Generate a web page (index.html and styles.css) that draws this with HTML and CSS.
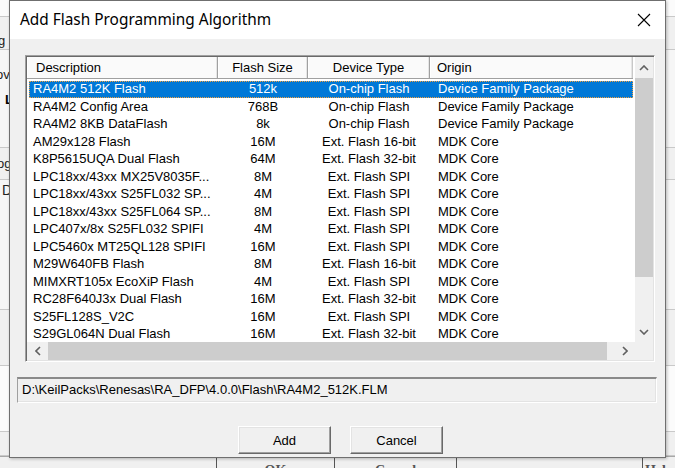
FILE: index.html
```html
<!DOCTYPE html>
<html>
<head>
<meta charset="utf-8">
<link rel="stylesheet" href="styles.css">
</head>
<body>
<div class="desktop">
  <div class="backwin">
    <div class="band b-white b1"></div>
    <div class="band b-gray b2"><span class="frag f-g">g</span></div>
    <div class="band b-light b3"><span class="frag f-ov">ov</span><span class="frag f-L">L</span></div>
    <div class="band b-gray b4"><span class="frag f-og">og</span></div>
    <div class="band b-light b5"><span class="frag f-D">D</span></div>
    <div class="band b-gray b6"></div>
    <div class="band b-white b7"></div>
    <div class="band b-gray b8"></div>
    <div class="band b-bottom b9">
      <span class="bcell bc1"></span>
      <span class="bcell bc2">OK</span>
      <span class="bcell bc3">Cancel</span>
      <span class="bcell bc4"></span>
      <span class="bcell bc5">Help</span>
    </div>
  </div>

  <div class="dialog">
    <div class="titlebar">
      <span class="title">Add Flash Programming Algorithm</span>
      <svg class="close" width="14" height="14" viewBox="0 0 14 14"><path d="M1 1 L13 13 M13 1 L1 13" stroke="#000" stroke-width="1.1" fill="none"/></svg>
    </div>
    <div class="body">
      <div class="listview">
        <div class="lv-main">
          <div class="lv-header">
            <div class="hcell c-desc">Description</div>
            <div class="hcell c-size">Flash Size</div>
            <div class="hcell c-type">Device Type</div>
            <div class="hcell c-origin">Origin</div>
          </div>
          <div class="lv-rows">
            <div class="row sel"><span class="c-desc">RA4M2 512K Flash</span><span class="c-size">512k</span><span class="c-type">On-chip Flash</span><span class="c-origin">Device Family Package</span></div>
            <div class="row"><span class="c-desc">RA4M2 Config Area</span><span class="c-size">768B</span><span class="c-type">On-chip Flash</span><span class="c-origin">Device Family Package</span></div>
            <div class="row"><span class="c-desc">RA4M2 8KB DataFlash</span><span class="c-size">8k</span><span class="c-type">On-chip Flash</span><span class="c-origin">Device Family Package</span></div>
            <div class="row"><span class="c-desc">AM29x128 Flash</span><span class="c-size">16M</span><span class="c-type">Ext. Flash 16-bit</span><span class="c-origin">MDK Core</span></div>
            <div class="row"><span class="c-desc">K8P5615UQA Dual Flash</span><span class="c-size">64M</span><span class="c-type">Ext. Flash 32-bit</span><span class="c-origin">MDK Core</span></div>
            <div class="row"><span class="c-desc">LPC18xx/43xx MX25V8035F...</span><span class="c-size">8M</span><span class="c-type">Ext. Flash SPI</span><span class="c-origin">MDK Core</span></div>
            <div class="row"><span class="c-desc">LPC18xx/43xx S25FL032 SP...</span><span class="c-size">4M</span><span class="c-type">Ext. Flash SPI</span><span class="c-origin">MDK Core</span></div>
            <div class="row"><span class="c-desc">LPC18xx/43xx S25FL064 SP...</span><span class="c-size">8M</span><span class="c-type">Ext. Flash SPI</span><span class="c-origin">MDK Core</span></div>
            <div class="row"><span class="c-desc">LPC407x/8x S25FL032 SPIFI</span><span class="c-size">4M</span><span class="c-type">Ext. Flash SPI</span><span class="c-origin">MDK Core</span></div>
            <div class="row"><span class="c-desc">LPC5460x MT25QL128 SPIFI</span><span class="c-size">16M</span><span class="c-type">Ext. Flash SPI</span><span class="c-origin">MDK Core</span></div>
            <div class="row"><span class="c-desc">M29W640FB Flash</span><span class="c-size">8M</span><span class="c-type">Ext. Flash 16-bit</span><span class="c-origin">MDK Core</span></div>
            <div class="row"><span class="c-desc">MIMXRT105x EcoXiP Flash</span><span class="c-size">4M</span><span class="c-type">Ext. Flash SPI</span><span class="c-origin">MDK Core</span></div>
            <div class="row"><span class="c-desc">RC28F640J3x Dual Flash</span><span class="c-size">16M</span><span class="c-type">Ext. Flash 32-bit</span><span class="c-origin">MDK Core</span></div>
            <div class="row"><span class="c-desc">S25FL128S_V2C</span><span class="c-size">16M</span><span class="c-type">Ext. Flash SPI</span><span class="c-origin">MDK Core</span></div>
            <div class="row"><span class="c-desc">S29GL064N Dual Flash</span><span class="c-size">16M</span><span class="c-type">Ext. Flash 32-bit</span><span class="c-origin">MDK Core</span></div>
          </div>
        </div>
        <div class="vscroll">
          <div class="sbtn vbtn"><svg width="10" height="6" viewBox="0 0 10 6"><polyline points="1,5 5,1 9,5" fill="none" stroke="#606060" stroke-width="1.6"/></svg></div>
          <div class="vthumb"></div>
          <div class="vtrack"></div>
          <div class="sbtn vbtn"><svg width="10" height="6" viewBox="0 0 10 6"><polyline points="1,1 5,5 9,1" fill="none" stroke="#606060" stroke-width="1.6"/></svg></div>
        </div>
        <div class="hscroll">
          <div class="sbtn hbtn"><svg width="6" height="10" viewBox="0 0 6 10"><polyline points="5,1 1,5 5,9" fill="none" stroke="#606060" stroke-width="1.6"/></svg></div>
          <div class="hthumb"></div>
          <div class="htrack"></div>
          <div class="sbtn hbtn"><svg width="6" height="10" viewBox="0 0 6 10"><polyline points="1,1 5,5 1,9" fill="none" stroke="#606060" stroke-width="1.6"/></svg></div>
        </div>
        <div class="corner"></div>
      </div>
      <div class="pathbox">D:\KeilPacks\Renesas\RA_DFP\4.0.0\Flash\RA4M2_512K.FLM</div>
      <div class="buttons">
        <div class="btn">Add</div>
        <div class="btn">Cancel</div>
      </div>
    </div>
  </div>
</div>
</body>
</html>
```

FILE: styles.css
```css
* { box-sizing: border-box; }
html, body { margin: 0; padding: 0; }
body {
  width: 675px;
  height: 468px;
  overflow: hidden;
  font-family: "Liberation Sans", Arial, sans-serif;
  background: #f0f0f0;
}
.desktop {
  position: relative;
  width: 675px;
  height: 468px;
  overflow: hidden;
}

/* background window */
.backwin {
  display: flex;
  flex-direction: column;
  height: 468px;
}
.band { position: relative; flex: none; border-bottom: 1px solid #c9c9c9; overflow: hidden; }
.b-white { background: #fbfbfb; }
.b-gray { background: #f0f0f0; }
.b-light { background: #f6f6f6; }
.b1 { height: 17px; }
.b2 { height: 33px; }
.b3 { height: 98px; }
.b4 { height: 32px; }
.b5 { height: 130px; }
.b6 { height: 56px; }
.b7 { height: 66px; }
.b8 { height: 24px; }
.b9 { flex: 1; border-bottom: 0; background: #f0f0f0; display: flex; border-top: 1px solid #a8a8a8; }
.frag { position: absolute; left: -2px; font-size: 13px; color: #222; }
.f-g { top: 16px; }
.f-ov { top: 17px; left: -4px; }
.f-L { top: 42px; left: 5px; font-weight: bold; color: #000; }
.f-og { top: 8px; left: -3px; }
.f-D { top: 2px; left: 2px; font-size: 14px; }
.bcell {
  font-family: "Liberation Serif", serif;
  font-size: 14px;
  font-weight: bold;
  color: #555;
  border-right: 1px solid #555;
  padding-top: 6px;
  text-align: center;
  line-height: 16px;
}
.bc1 { width: 217px; }
.bc2 { width: 118px; }
.bc3 { width: 122px; }
.bc4 { width: 186px; }
.bc5 { flex: 1; border-right: 0; text-align: left; padding-left: 2px; }

/* dialog */
.dialog {
  position: absolute;
  left: 9px;
  top: 0;
  width: 657px;
  height: 458px;
  border: 1px solid #6f6f6f;
  background: #f0f0f0;
  box-shadow: 1px 1px 3px rgba(0,0,0,0.25);
  display: flex;
  flex-direction: column;
}
.titlebar {
  height: 38px;
  background: #fff;
  display: flex;
  align-items: center;
  justify-content: space-between;
  padding: 0 14px 0 10px;
  flex: none;
}
.title {
  font-family: "Noto Sans", "Open Sans", sans-serif;
  font-size: 15.4px;
  color: #000;
  padding-bottom: 2px;
}
.close { display: block; margin-bottom: 1px; }

.body {
  flex: 1;
  padding: 16px 0 0 0;
  display: flex;
  flex-direction: column;
}

/* list view */
.listview {
  margin-left: 15px;
  width: 630px;
  height: 307px;
  border-top: 1px solid #a0a0a0;
  border-left: 1px solid #a0a0a0;
  border-right: 1px solid #fff;
  border-bottom: 1px solid #fff;
  box-shadow: inset 1px 1px 0 #696969, inset -1px -1px 0 #e3e3e3;
  padding: 1px;
  display: grid;
  grid-template-columns: 608px 18px;
  grid-template-rows: 285px 18px;
  background: #fff;
  font-size: 13px;
}
.lv-main { overflow: hidden; background: #fff; }
.lv-header {
  display: flex;
  height: 22px;
  width: 606px;
  background: #fafafa;
  border-bottom: 1px solid #a0a0a0;
}
.hcell {
  display: flex;
  align-items: center;
  border-right: 1px solid #a0a0a0;
  box-shadow: inset -1px 0 0 #e5e5e5, inset 1px 0 0 #fff;
  line-height: 16px;
  white-space: nowrap;
}
.lv-header .c-desc { width: 191px; padding-left: 9px; }
.lv-header .c-size { width: 90px; justify-content: center; }
.lv-header .c-type { width: 122px; justify-content: center; }
.lv-header .c-origin { flex: 1; padding-left: 7px; border-right: 1px solid #c8c8c8; }

.lv-rows { padding-top: 1.5px; }
.row {
  display: flex;
  height: 17.5px;
  margin: 0 2px;
  align-items: center;
  white-space: nowrap;
  color: #000;
}
.row span { display: block; line-height: 16px; }
.row .c-desc { width: 189px; padding-left: 4px; }
.row .c-size { width: 90px; text-align: center; }
.row .c-type { width: 122px; text-align: center; }
.row .c-origin { flex: 1; padding-left: 8px; }
.row.sel {
  background: #0078d7;
  color: #fff;
  outline: 1px dotted #f0a040;
  outline-offset: -1px;
}

/* scrollbars */
.vscroll {
  background: #f0f0f0;
  display: flex;
  flex-direction: column;
}
.sbtn {
  display: flex;
  align-items: center;
  justify-content: center;
  flex: none;
}
.vbtn { height: 21px; }
.vthumb { height: 199px; background: #cdcdcd; flex: none; }
.vtrack { flex: 1; }
.hscroll {
  background: #f0f0f0;
  display: flex;
}
.hbtn { width: 21px; }
.hthumb { width: 559px; background: #cdcdcd; flex: none; }
.htrack { flex: 1; }
.corner { background: #f0f0f0; }

/* path text box */
.pathbox {
  margin: 15px 0 0 7px;
  width: 640px;
  height: 26px;
  border-top: 2px solid #8a8a8a;
  border-left: 1px solid #a0a0a0;
  border-right: 1px solid #fff;
  border-bottom: 1px solid #fff;
  box-shadow: inset -1px -1px 0 #e3e3e3;
  background: #f0f0f0;
  font-size: 13px;
  line-height: 16px;
  padding: 3px 0 0 4px;
  color: #000;
  white-space: nowrap;
}

/* buttons */
.buttons {
  display: flex;
  gap: 19px;
  margin: 23px 0 0 228px;
}
.btn {
  width: 93px;
  height: 28px;
  display: flex;
  align-items: center;
  justify-content: center;
  font-size: 13px;
  color: #000;
  background: #f0f0f0;
  border-top: 1px solid #fff;
  border-left: 1px solid #fff;
  border-right: 1px solid #696969;
  border-bottom: 1px solid #696969;
  box-shadow: inset -1px -1px 0 #a0a0a0, inset 1px 1px 0 #e3e3e3;
}
```
